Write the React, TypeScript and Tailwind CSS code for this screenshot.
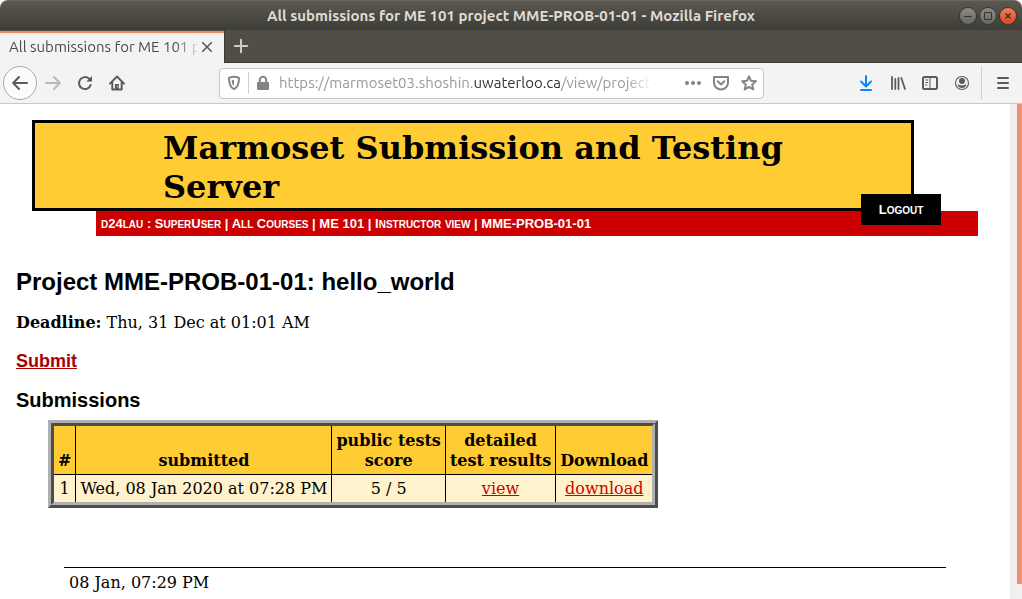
import type { ReactNode } from "react";

const uiFont = "font-['Ubuntu','Noto_Sans',sans-serif]";

function Icon({ children, className = "text-[#5c5b59]" }: { children: ReactNode; className?: string }) {
  return (
    <svg
      viewBox="0 0 16 16"
      className={`size-4 shrink-0 ${className}`}
      fill="none"
      stroke="currentColor"
      strokeWidth="2"
      strokeLinecap="round"
      strokeLinejoin="round"
      aria-hidden="true"
    >
      {children}
    </svg>
  );
}

function WindowButton({ label, close, children }: { label: string; close?: boolean; children: ReactNode }) {
  return (
    <button
      aria-label={label}
      className={`flex size-4 items-center justify-center rounded-full bg-linear-to-b ring-1 ring-[#35342f] ${
        close ? "from-[#f37b52] to-[#df4a16]" : "from-[#8b8a84] to-[#66655f]"
      }`}
    >
      <svg viewBox="0 0 16 16" className="size-4" fill="none" stroke="#35342f" strokeWidth="1" aria-hidden="true">
        {children}
      </svg>
    </button>
  );
}

function TitleBar() {
  return (
    <div className="bg-white">
      <header className="grid h-[30px] grid-cols-[1fr_auto_1fr] items-center rounded-t-lg border-t border-[#6a6861] bg-linear-to-b from-[#5b5950] to-[#3d3c37]">
        <span />
        <span className="text-[15px] leading-5 font-bold text-[#dfdbd2]">
          All submissions for ME 101 project MME-PROB-01-01 - Mozilla Firefox
        </span>
        <div className="flex justify-end gap-1 pr-1.5">
          <WindowButton label="Minimize">
            <path d="M4 8.5h8" />
          </WindowButton>
          <WindowButton label="Maximize">
            <path d="M4.5 4.5h7v7h-7z" />
          </WindowButton>
          <WindowButton label="Close window" close>
            <path d="m5.5 5.5 5 5m0-5-5 5" strokeWidth="1.5" />
          </WindowButton>
        </div>
      </header>
    </div>
  );
}

function TabStrip() {
  return (
    <div className="flex h-[33px] bg-[#504e45]">
      <div className="mt-px flex w-56 items-center border-t-2 border-[#f08763] bg-[#f4f3f2] pr-[11px] pb-0.5 pl-[9px]">
        <span className="min-w-0 flex-1 text-[15px] leading-5 whitespace-nowrap text-[#4a4a48] mask-r-from-88% mask-r-to-102%">
          All submissions for ME 101 p
        </span>
        <button aria-label="Close tab" className="ml-1">
          <svg viewBox="0 0 12 12" className="size-3" stroke="#5c5b59" strokeWidth="1.6" strokeLinecap="round" aria-hidden="true">
            <path d="m1.7 1.7 8.6 8.6m0-8.6-8.6 8.6" />
          </svg>
        </button>
      </div>
      <div className="flex flex-1 items-center border-b border-l border-[#3a3934] pl-2">
        <button aria-label="New tab">
          <svg viewBox="0 0 16 16" className="size-4" stroke="#cfccc3" strokeWidth="2" strokeLinecap="round" aria-hidden="true">
            <path d="M8 1.8v12.4M1.8 8h12.4" />
          </svg>
        </button>
      </div>
    </div>
  );
}

function Toolbar() {
  return (
    <div className="flex h-[41px] items-center border-b border-[#c9c7c5] bg-[#f4f3f2] pl-[3px]">
      <div className="flex items-center gap-4">
        <button aria-label="Back" className="-mr-2 flex size-[34px] items-center justify-center rounded-full border border-[#aaa9a7] bg-[#fcfcfc]">
          <Icon>
            <path d="M15 8H1.5M7 2 1.2 8 7 14" />
          </Icon>
        </button>
        <button aria-label="Forward">
          <Icon className="text-[#bab9b7]">
            <path d="M1 8h13.5M9 2l5.8 6L9 14" />
          </Icon>
        </button>
        <button aria-label="Reload">
          <Icon>
            <path d="M13.7 10A6 6 0 1 1 12 3.6l1.6 1.6" />
            <path d="M15 1v5.6H9.4z" fill="currentColor" stroke="none" />
          </Icon>
        </button>
        <button aria-label="Home">
          <Icon>
            <path d="m1 8.6 7-7.1 7 7.1M3.3 7.5v7h9.4v-7" />
            <path d="M6 14.5V9h4v5.5z" fill="currentColor" stroke="none" />
            <path d="M8.8 11.2v.8" stroke="#f4f3f2" strokeWidth="1" />
          </Icon>
        </button>
      </div>

      <div className="ml-[94px] flex h-[31px] min-w-0 flex-1 items-center rounded border border-[#c9c7c5] bg-white px-1.5">
        <Icon className="text-[#858482]">
          <path d="M8 1.8c1.8 0 3.4.4 5 1.1 0 5.2-.8 9-5 11.3-4.2-2.3-5-6.1-5-11.3 1.6-.7 3.2-1.1 5-1.1z" />
          <path d="M8 4.7v6.4c-1.7-1.5-2.2-3.3-2.3-5.9.8-.3 1.5-.5 2.3-.5z" fill="currentColor" stroke="none" />
        </Icon>
        <span className="mx-1.5 h-[22px] w-px bg-[#cfcdcb]" />
        <Icon className="text-[#858482]">
          <path d="M4.8 8V5a3.2 3.2 0 0 1 6.4 0v3" />
          <rect x="2" y="7" width="12" height="8" rx="1" fill="currentColor" stroke="none" />
        </Icon>
        <div className="ml-2 min-w-0 flex-1 text-[15px] leading-5 whitespace-nowrap text-[#9a9997] mask-r-from-94% mask-r-to-101%">
          https://marmoset03.shoshin.<span className="text-[#333331]">uwaterloo.ca</span>/view/project.
        </div>
        <div className="ml-9 flex items-center gap-3">
          <button aria-label="Page actions">
            <Icon className="text-[#858482]">
              <path d="M2 8h.01M8 8h.01M14 8h.01" strokeWidth="4" />
            </Icon>
          </button>
          <button aria-label="Save to Pocket">
            <Icon className="text-[#858482]">
              <path d="M1 2h14v5.5a7 7 0 0 1-14 0zM4.7 6.3 8 9.4l3.3-3.1" />
            </Icon>
          </button>
          <button aria-label="Bookmark this page">
            <Icon className="text-[#858482]">
              <path d="m8 1.3 2 4.5 4.9.5-3.7 3.3 1.1 4.8L8 11.9l-4.3 2.5 1.1-4.8L1.1 6.3 6 5.8z" />
            </Icon>
          </button>
        </div>
      </div>

      <div className="ml-[94px] flex items-center gap-4">
        <button aria-label="Downloads">
          <Icon className="text-[#0a84ff]">
            <path d="M8 1v9.5M3 6.5l5 5 5-5M3 15h10" />
          </Icon>
        </button>
        <button aria-label="Library">
          <Icon>
            <path d="M2 2v12M5.3 4v10M8.5 3v11M11.3 3l3.7 11" strokeWidth="1.8" />
          </Icon>
        </button>
        <button aria-label="Sidebars">
          <Icon>
            <rect x="1" y="2" width="14" height="12" rx="1.5" />
            <path d="M8 2v12M3.8 5h2M3.8 7.5h2M3.8 10h1" strokeWidth="1" />
          </Icon>
        </button>
        <button aria-label="Account">
          <Icon>
            <circle cx="8" cy="8" r="6.5" strokeWidth="1.1" />
            <circle cx="8" cy="6" r="3" fill="currentColor" stroke="none" />
            <path d="M3.5 9.7c1.5-.5 1.8.8 4.5.8s3-1.3 4.5-.8c-.7 2-2.5 3.3-4.5 3.3s-3.8-1.3-4.5-3.3z" fill="currentColor" stroke="none" />
          </Icon>
        </button>
      </div>
      <div className="ml-[11px] flex h-[34px] items-center border-l border-[#d2d0ce] pr-[11px] pl-[13px]">
        <button aria-label="Menu">
          <Icon>
            <path d="M3 3h10M3 8h10M3 13h10" />
          </Icon>
        </button>
      </div>
    </div>
  );
}

/** Small capitals at about four fifths of the full capital height. */
function SmallCaps({ children }: { children: string }) {
  return children.split(/([a-z]+)/).map((run, i) =>
    /[a-z]/.test(run) ? (
      <span key={i} className="text-[10px] leading-none uppercase">
        {run}
      </span>
    ) : (
      run
    ),
  );
}

const trail = ["SuperUser", "All Courses", "ME 101", "Instructor view", "MME-PROB-01-01"];

function Banner() {
  return (
    <div className="relative pt-4 font-['Liberation_Sans',sans-serif]">
      <div className="mr-24 ml-8 border-[3px] border-black bg-[#ffcc33] pt-1.5 pr-24 pb-px pl-32">
        <h1 className="font-['DejaVu_Serif',serif] text-[32px] leading-[39px] font-bold">
          Marmoset Submission and Testing Server
        </h1>
      </div>
      <nav className="mr-8 ml-24 bg-[#cc0000] px-[5px] text-[13px] leading-[25px] font-bold text-white">
        <SmallCaps>d24lau</SmallCaps>
        {trail.map((name, i) => (
          <span key={name}>
            {i === 0 ? " : " : " | "}
            <a href="#trail">
              <SmallCaps>{name}</SmallCaps>
            </a>
          </span>
        ))}
      </nav>
      <a
        href="#logout"
        className="absolute right-[69px] bottom-[11px] w-20 bg-black text-center text-[13px] leading-[31px] font-bold text-white"
      >
        <SmallCaps>Logout</SmallCaps>
      </a>
    </div>
  );
}

const columns: ReactNode[] = [
  "#",
  "submitted",
  <>public tests<br />score</>,
  <>detailed<br />test results</>,
  "Download",
];

function Submissions() {
  return (
    <div className="mt-2 ml-8 w-fit border-[3px] border-t-[#b0b0b0] border-r-[#4d4d4d] border-b-[#4d4d4d] border-l-[#b0b0b0]">
      <div className="border-[3px] border-t-[#4d4d4d] border-r-[#b0b0b0] border-b-[#b0b0b0] border-l-[#4d4d4d]">
        <table className="text-center whitespace-nowrap">
          <thead className="bg-[#ffcc33]">
            <tr className="divide-x divide-black">
              {columns.map((column, i) => (
                <th key={i} scope="col" className="px-1 pt-[5px] pb-[3px] align-bottom leading-5">
                  {column}
                </th>
              ))}
            </tr>
          </thead>
          <tbody className="bg-[#fff2cc]">
            <tr className="divide-x divide-black border-t border-black leading-5 *:px-1 *:pt-1 *:pb-[3px]">
              <td>1</td>
              <td>Wed, 08 Jan 2020 at 07:28 PM</td>
              <td>5 / 5</td>
              <td>
                <a href="#view" className="text-[#cc0000] underline">view</a>
              </td>
              <td>
                <a href="#download" className="text-[#cc0000] underline">download</a>
              </td>
            </tr>
          </tbody>
        </table>
      </div>
    </div>
  );
}

export default function App() {
  return (
    <div className="flex h-screen flex-col overflow-hidden bg-white text-black">
      <div className={`shrink-0 ${uiFont}`}>
        <TitleBar />
        <TabStrip />
        <Toolbar />
      </div>
      <div className="flex min-h-0 flex-1">
        <main className="min-w-0 flex-1 overflow-hidden font-['DejaVu_Serif',serif] text-base leading-5">
          <Banner />
          <section className="px-4 pt-8">
            <h2 className="font-['Liberation_Sans',sans-serif] text-2xl leading-7 font-bold">
              Project MME-PROB-01-01: hello_world
            </h2>
            <p className="mt-[17px]">
              <b>Deadline:</b> Thu, 31 Dec at 01:01 AM
            </p>
            <h3 className="mt-[18px] font-['Liberation_Sans',sans-serif] text-lg leading-5 font-bold">
              <a href="#submit" className="text-[#aa0000] underline">Submit</a>
            </h3>
            <h2 className="mt-[17px] font-['Liberation_Sans',sans-serif] text-xl leading-6 font-bold">Submissions</h2>
            <Submissions />
          </section>
          <footer className="mx-16 mt-[59px] border-t border-black px-[5px] pt-[5px]">08 Jan, 07:29 PM</footer>
        </main>
        <div className="flex w-3 justify-end bg-[#f1f0ee] pb-[15px]">
          <div className="w-[5px] bg-[#f2906b]" />
        </div>
      </div>
    </div>
  );
}
